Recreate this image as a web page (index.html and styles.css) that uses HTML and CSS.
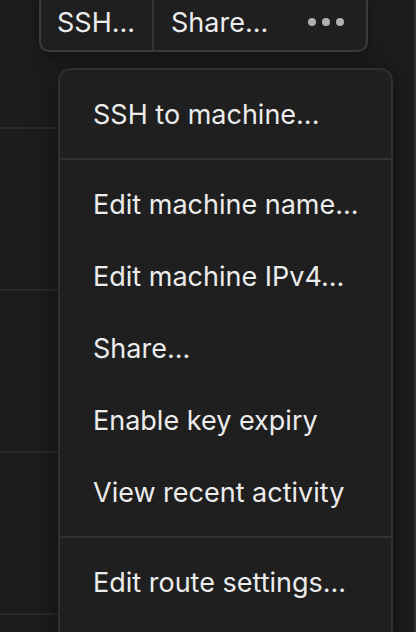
FILE: index.html
```html
<!DOCTYPE html>
<html lang="en">
<head>
<meta charset="utf-8">
<title>Machine menu</title>
<link rel="stylesheet" href="styles.css">
</head>
<body>
<div class="page">
  <div class="table">
    <div class="row row-first"></div>
    <div class="row"></div>
    <div class="row"></div>
    <div class="row"></div>
  </div>
  <div class="side"></div>
</div>

<div class="btn-group">
  <button class="btn btn-ssh">SSH...</button>
  <button class="btn btn-share">Share...</button>
  <button class="btn btn-more" aria-label="More">
    <span class="dot"></span><span class="dot"></span><span class="dot"></span>
  </button>
</div>

<div class="menu">
  <div class="group">
    <div class="item">SSH to machine...</div>
  </div>
  <div class="sep"></div>
  <div class="group">
    <div class="item">Edit machine name...</div>
    <div class="item">Edit machine IPv4...</div>
    <div class="item">Share...</div>
    <div class="item">Enable key expiry</div>
    <div class="item">View recent activity</div>
  </div>
  <div class="sep"></div>
  <div class="group">
    <div class="item">Edit route settings...</div>
  </div>
</div>
</body>
</html>
```

FILE: styles.css
```css
html, body {
  margin: 0;
  padding: 0;
  width: 416px;
  height: 632px;
  overflow: hidden;
  background: #1c1c1c;
  font-family: Inter, "Noto Sans", sans-serif;
  color: #ececec;
}

.page {
  display: flex;
  height: 632px;
}

.table {
  width: 392px;
  display: flex;
  flex-direction: column;
  overflow: hidden;
}

.row {
  flex: none;
  height: 160px;
  border-bottom: 2px solid #2b2b2b;
}

.row-first {
  height: 127px;
}

.side {
  flex: 1;
  display: flex;
  justify-content: flex-end;
}

.side::after {
  content: "";
  width: 2px;
  background: #333333;
}

.btn-group {
  position: absolute;
  left: 39px;
  top: -6px;
  display: flex;
  height: 56px;
  border: 2px solid #3a3a3a;
  border-top: 0;
  border-radius: 0 0 10px 10px;
  background: #1f1f1f;
  box-shadow: 0 4px 14px rgba(0, 0, 0, 0.35);
  overflow: hidden;
}

.btn {
  display: flex;
  align-items: center;
  padding: 0 17px 0 16px;
  margin: 0;
  border: 0;
  background: transparent;
  color: #ececec;
  font-family: inherit;
  font-size: 27px;
  line-height: 1;
}

.btn + .btn {
  border-left: 2px solid #333333;
}

.btn-group .btn-share {
  padding: 0 17px;
}

.btn-group .btn-more {
  border-left: 0;
  padding: 0 22px 0 23px;
  gap: 6px;
}

.dot {
  width: 8px;
  height: 8px;
  border-radius: 50%;
  background: #b0b0b0;
}

.menu {
  position: absolute;
  left: 58px;
  top: 68px;
  width: 331px;
  height: 562px;
  border: 2px solid #303030;
  border-bottom: 0;
  border-radius: 13px 13px 0 0;
  background: #1f1f1f;
  box-shadow: 0 6px 28px rgba(0, 0, 0, 0.45);
}

.group {
  padding: 8px 0;
}

.item {
  height: 72px;
  display: flex;
  align-items: center;
  padding-left: 33px;
  font-size: 27px;
  white-space: nowrap;
}

.sep {
  height: 2px;
  background: #303030;
}
```
